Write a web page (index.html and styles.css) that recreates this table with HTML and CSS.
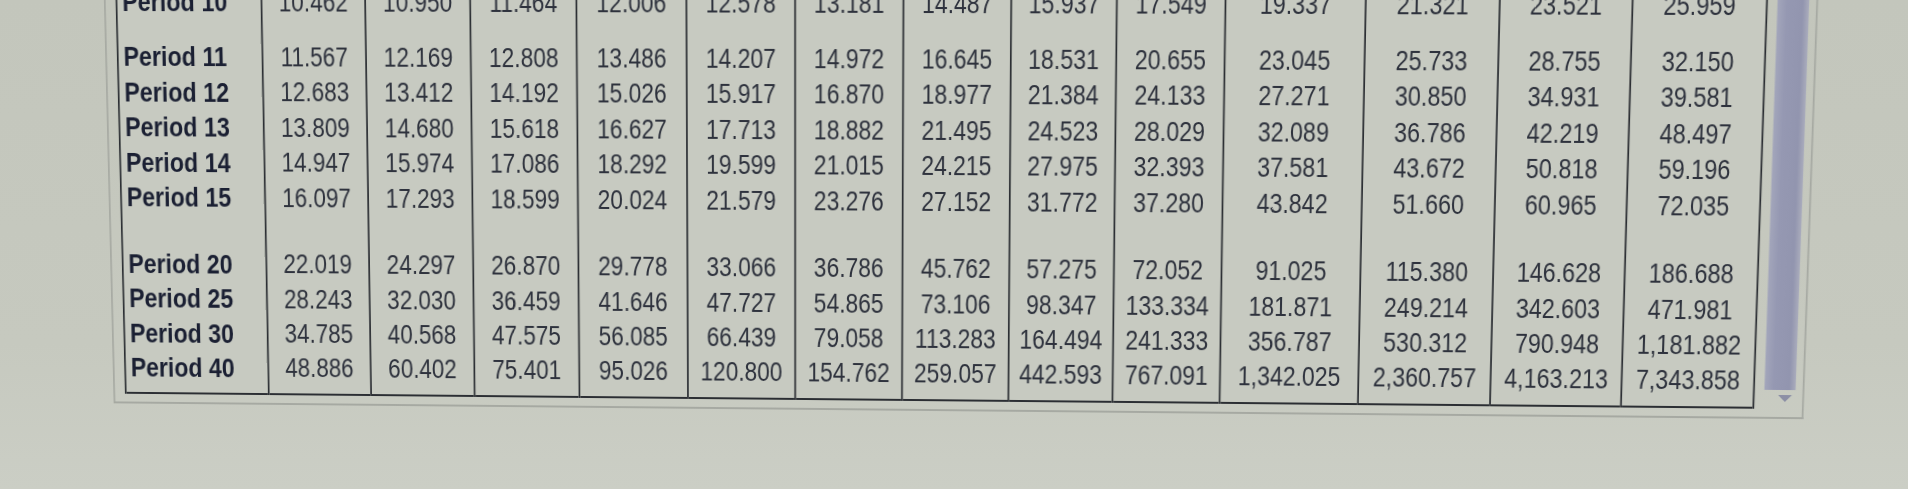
FILE: index.html
```html
<!DOCTYPE html>
<html lang="en">
<head>
<meta charset="utf-8">
<title>Future value table</title>
<link rel="stylesheet" href="styles.css">
</head>
<body>
<div class="screen">
  <div class="stage">
    <div class="frame">
      <table class="fv">
        <colgroup>
          <col class="c-label">
          <col class="c-a"><col class="c-b"><col class="c-c"><col class="c-d"><col class="c-e"><col class="c-f"><col class="c-g"><col class="c-h"><col class="c-i">
          <col class="c-j"><col class="c-k"><col class="c-l"><col class="c-m">
        </colgroup>
        <tbody>
          <tr><th>Period 10</th><td>10.462</td><td>10.950</td><td>11.464</td><td>12.006</td><td>12.578</td><td>13.181</td><td>14.487</td><td>15.937</td><td>17.549</td><td>19.337</td><td>21.321</td><td>23.521</td><td>25.959</td></tr>
          <tr class="gap gap-s"><th></th><td></td><td></td><td></td><td></td><td></td><td></td><td></td><td></td><td></td><td></td><td></td><td></td><td></td></tr>
          <tr><th>Period 11</th><td>11.567</td><td>12.169</td><td>12.808</td><td>13.486</td><td>14.207</td><td>14.972</td><td>16.645</td><td>18.531</td><td>20.655</td><td>23.045</td><td>25.733</td><td>28.755</td><td>32.150</td></tr>
          <tr><th>Period 12</th><td>12.683</td><td>13.412</td><td>14.192</td><td>15.026</td><td>15.917</td><td>16.870</td><td>18.977</td><td>21.384</td><td>24.133</td><td>27.271</td><td>30.850</td><td>34.931</td><td>39.581</td></tr>
          <tr><th>Period 13</th><td>13.809</td><td>14.680</td><td>15.618</td><td>16.627</td><td>17.713</td><td>18.882</td><td>21.495</td><td>24.523</td><td>28.029</td><td>32.089</td><td>36.786</td><td>42.219</td><td>48.497</td></tr>
          <tr><th>Period 14</th><td>14.947</td><td>15.974</td><td>17.086</td><td>18.292</td><td>19.599</td><td>21.015</td><td>24.215</td><td>27.975</td><td>32.393</td><td>37.581</td><td>43.672</td><td>50.818</td><td>59.196</td></tr>
          <tr><th>Period 15</th><td>16.097</td><td>17.293</td><td>18.599</td><td>20.024</td><td>21.579</td><td>23.276</td><td>27.152</td><td>31.772</td><td>37.280</td><td>43.842</td><td>51.660</td><td>60.965</td><td>72.035</td></tr>
          <tr class="gap gap-l"><th></th><td></td><td></td><td></td><td></td><td></td><td></td><td></td><td></td><td></td><td></td><td></td><td></td><td></td></tr>
          <tr><th>Period 20</th><td>22.019</td><td>24.297</td><td>26.870</td><td>29.778</td><td>33.066</td><td>36.786</td><td>45.762</td><td>57.275</td><td>72.052</td><td>91.025</td><td>115.380</td><td>146.628</td><td>186.688</td></tr>
          <tr><th>Period 25</th><td>28.243</td><td>32.030</td><td>36.459</td><td>41.646</td><td>47.727</td><td>54.865</td><td>73.106</td><td>98.347</td><td>133.334</td><td>181.871</td><td>249.214</td><td>342.603</td><td>471.981</td></tr>
          <tr><th>Period 30</th><td>34.785</td><td>40.568</td><td>47.575</td><td>56.085</td><td>66.439</td><td>79.058</td><td>113.283</td><td>164.494</td><td>241.333</td><td>356.787</td><td>530.312</td><td>790.948</td><td>1,181.882</td></tr>
          <tr class="last"><th>Period 40</th><td>48.886</td><td>60.402</td><td>75.401</td><td>95.026</td><td>120.800</td><td>154.762</td><td>259.057</td><td>442.593</td><td>767.091</td><td>1,342.025</td><td>2,360.757</td><td>4,163.213</td><td>7,343.858</td></tr>
        </tbody>
      </table>
      <div class="scrollbar">
        <div class="thumb"></div>
        <div class="arrow"></div>
      </div>
    </div>
  </div>
</div>
</body>
</html>
```

FILE: styles.css
```css
html, body {
  margin: 0;
  padding: 0;
}

body {
  width: 1908px;
  height: 489px;
  overflow: hidden;
  background: linear-gradient(180deg, #c3c6bc 0%, #c6c9bf 70%, #cbcec5 100%);
  font-family: "Liberation Sans", Arial, sans-serif;
}

/* photo of a monitor: slight keystone and tilt */
.screen {
  width: 1908px;
  height: 489px;
  transform-origin: 940px 200px;
  transform: perspective(1000px) rotateX(-2deg) rotateY(-1deg) rotate(0.28deg);
}

/* the on-screen text is horizontally condensed in the photo */
.stage {
  width: 2245px;
  transform-origin: 0 0;
  transform: scaleX(0.85);
}

.frame {
  display: flex;
  align-items: flex-start;
  gap: 11px;
  width: 2003px;
  box-sizing: border-box;
  margin-left: 113px;
  margin-top: -14px;
  padding: 0 8px 8px 12px;
  border: 2px solid #a6a9a2;
  border-top: none;
}

.fv {
  flex: none;
  width: 1930px;
  table-layout: fixed;
  border-collapse: collapse;
  border: 2px solid #2b2e33;
  background: #c7cac1;
  color: #2e323d;
  font-size: 27px;
  line-height: 1;
}

.c-label { width: 174px; }
.c-a { width: 124px; }
.c-b { width: 125px; }
.c-c { width: 126px; }
.c-d { width: 130px; }
.c-e { width: 128px; }
.c-f { width: 127px; }
.c-g { width: 126px; }
.c-h { width: 123px; }
.c-i { width: 126px; }
.c-j { width: 162px; }
.c-k { width: 154px; }
.c-l { width: 152px; }
.c-m { width: 153px; }

.fv tr {
  height: 35.5px;
}

.fv th,
.fv td {
  padding: 0 4px;
  border-left: 2px solid #2b2e33;
  border-right: 2px solid #2b2e33;
  white-space: nowrap;
  overflow: hidden;
  vertical-align: middle;
}

.fv th {
  text-align: left;
  font-size: 28px;
  font-weight: 700;
  color: #1b2033;
  padding-left: 6px;
}

.fv td {
  text-align: center;
  font-weight: 400;
}

.fv tr.gap-s { height: 20px; }
.fv tr.gap-l { height: 32px; }

.fv tr.last { height: 43.5px; }
.fv tr.last th,
.fv tr.last td { padding-bottom: 8px; }

.scrollbar {
  flex: none;
  display: flex;
  flex-direction: column;
  align-items: center;
  width: 36px;
}

.thumb {
  width: 36px;
  height: 398px;
  background: linear-gradient(90deg, #a3a6bb 0%, #9598b2 30%, #9295af 80%, #aaacbc 100%);
}

.arrow {
  margin-top: 5px;
  margin-left: 12px;
  width: 0;
  height: 0;
  border-left: 8px solid transparent;
  border-right: 8px solid transparent;
  border-top: 7px solid #8c8fa5;
}
```
